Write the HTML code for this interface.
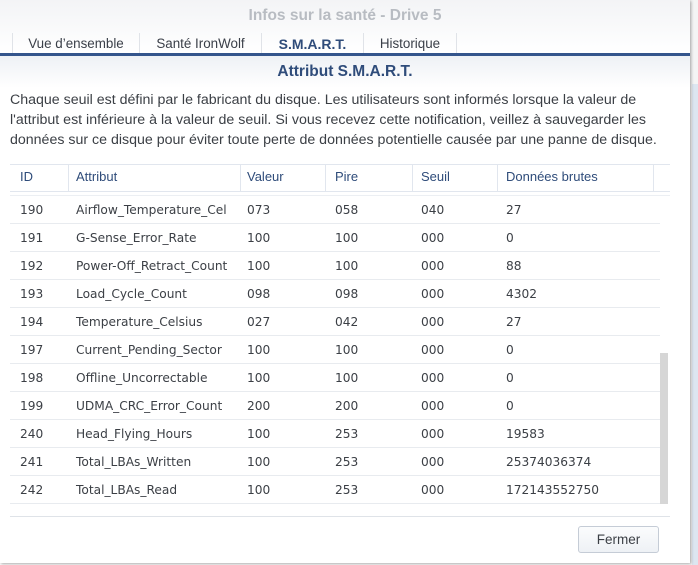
<!DOCTYPE html>
<html><head><meta charset="utf-8"><style>
*{margin:0;padding:0;box-sizing:border-box}
body{width:698px;height:565px;overflow:hidden;background:#fff;font-family:"Liberation Sans",sans-serif;position:relative}
.bgr{position:absolute;left:690px;top:0;width:8px;height:565px;background:#f4f4f4}
.bgr2{position:absolute;left:692px;top:84px;width:6px;height:481px;background:#dde6f0}
.dlg{position:absolute;left:0;top:0;width:690px;height:563px;background:#fff;box-shadow:1px 1px 3px rgba(0,0,0,.35)}
.head{position:absolute;left:0;top:0;width:690px;height:53px;background:linear-gradient(#f3f4f6,#fff)}
.title{position:absolute;top:7px;left:0;width:690px;text-align:center;font-size:15.5px;font-weight:bold;color:#b8bcc2}
.tab{position:absolute;top:33px;height:20px;font-size:13.4px;color:#3a3f48;text-align:center;line-height:22px;border-right:1px solid #e0e3e8}
.blue{position:absolute;left:0;top:53px;width:690px;height:3px;background:#34558c}
.sub{position:absolute;top:56px;left:0;width:690px;height:32px;background:linear-gradient(#eef1f5,#fff);text-align:center;font-size:15.5px;font-weight:bold;color:#2f4c7a;line-height:32px}
.p{position:absolute;left:10px;top:90px;width:690px;font-size:14.2px;line-height:20px;color:#3b3f45;white-space:nowrap}
.hline{position:absolute;left:10px;width:660px;height:1px;background:#e1e6ee}
.th{position:absolute;top:169px;font-size:13px;color:#2f4c7a}
.vs{position:absolute;top:165px;height:26px;width:1px;background:#e1e6ee}
.row{position:absolute;left:10px;width:650px;height:28px;border-bottom:1px solid #e8ebef;font-family:"DejaVu Sans",sans-serif;font-size:12.2px;color:#3b3f45}
.row span{position:absolute;top:7px}
.sb{position:absolute;left:660px;top:353px;width:8px;height:151px;background:#d6d6d6}
.btn{position:absolute;left:578px;top:526px;width:81px;height:27px;border:1px solid #c5ccd6;border-radius:3px;background:linear-gradient(#fbfcfd,#eef1f5);font-size:13.5px;color:#3b3f45;text-align:center;line-height:25px}
</style></head><body>
<div class="bgr"></div><div class="bgr2"></div>
<div class="dlg">
<div class="head">
<div class="title">Infos sur la santé - Drive 5</div>
<div class="tab" style="left:12px;width:128px;border-left:1px solid #e0e3e8">Vue d’ensemble</div>
<div class="tab" style="left:140px;width:122px">Santé IronWolf</div>
<div class="tab" style="left:262px;width:102px;color:#2f4c7a;font-weight:bold;font-size:14px">S.M.A.R.T.</div>
<div class="tab" style="left:364px;width:93px">Historique</div>
</div>
<div class="blue"></div>
<div class="sub">Attribut S.M.A.R.T.</div>
<div class="p">Chaque seuil est défini par le fabricant du disque. Les utilisateurs sont informés lorsque la valeur de<br>l'attribut est inférieure à la valeur de seuil. Si vous recevez cette notification, veillez à sauvegarder les<br>données sur ce disque pour éviter toute perte de données potentielle causée par une panne de disque.</div>
<div class="hline" style="top:164px"></div>
<div class="hline" style="top:191px"></div>
<div class="hline" style="top:195px;background:#eceff3"></div>
<div class="vs" style="left:68px"></div><div class="vs" style="left:240px"></div><div class="vs" style="left:325px"></div><div class="vs" style="left:412px"></div><div class="vs" style="left:497px"></div><div class="vs" style="left:653px"></div>
<div class="th" style="left:20px">ID</div><div class="th" style="left:76px">Attribut</div><div class="th" style="left:247px">Valeur</div><div class="th" style="left:335px">Pire</div><div class="th" style="left:421px">Seuil</div><div class="th" style="left:506px">Données brutes</div>

<div class="row" style="top:196px"><span style="left:10px">190</span><span style="left:66px">Airflow_Temperature_Cel</span><span style="left:237px">073</span><span style="left:325px">058</span><span style="left:411px">040</span><span style="left:496px">27</span></div>
<div class="row" style="top:224px"><span style="left:10px">191</span><span style="left:66px">G-Sense_Error_Rate</span><span style="left:237px">100</span><span style="left:325px">100</span><span style="left:411px">000</span><span style="left:496px">0</span></div>
<div class="row" style="top:252px"><span style="left:10px">192</span><span style="left:66px">Power-Off_Retract_Count</span><span style="left:237px">100</span><span style="left:325px">100</span><span style="left:411px">000</span><span style="left:496px">88</span></div>
<div class="row" style="top:280px"><span style="left:10px">193</span><span style="left:66px">Load_Cycle_Count</span><span style="left:237px">098</span><span style="left:325px">098</span><span style="left:411px">000</span><span style="left:496px">4302</span></div>
<div class="row" style="top:308px"><span style="left:10px">194</span><span style="left:66px">Temperature_Celsius</span><span style="left:237px">027</span><span style="left:325px">042</span><span style="left:411px">000</span><span style="left:496px">27</span></div>
<div class="row" style="top:336px"><span style="left:10px">197</span><span style="left:66px">Current_Pending_Sector</span><span style="left:237px">100</span><span style="left:325px">100</span><span style="left:411px">000</span><span style="left:496px">0</span></div>
<div class="row" style="top:364px"><span style="left:10px">198</span><span style="left:66px">Offline_Uncorrectable</span><span style="left:237px">100</span><span style="left:325px">100</span><span style="left:411px">000</span><span style="left:496px">0</span></div>
<div class="row" style="top:392px"><span style="left:10px">199</span><span style="left:66px">UDMA_CRC_Error_Count</span><span style="left:237px">200</span><span style="left:325px">200</span><span style="left:411px">000</span><span style="left:496px">0</span></div>
<div class="row" style="top:420px"><span style="left:10px">240</span><span style="left:66px">Head_Flying_Hours</span><span style="left:237px">100</span><span style="left:325px">253</span><span style="left:411px">000</span><span style="left:496px">19583</span></div>
<div class="row" style="top:448px"><span style="left:10px">241</span><span style="left:66px">Total_LBAs_Written</span><span style="left:237px">100</span><span style="left:325px">253</span><span style="left:411px">000</span><span style="left:496px">25374036374</span></div>
<div class="row" style="top:476px"><span style="left:10px">242</span><span style="left:66px">Total_LBAs_Read</span><span style="left:237px">100</span><span style="left:325px">253</span><span style="left:411px">000</span><span style="left:496px">172143552750</span></div>
<div class="sb"></div>
<div class="hline" style="top:516px;background:#dfe3e8"></div>
<div class="btn">Fermer</div>
</div>
</body></html>
